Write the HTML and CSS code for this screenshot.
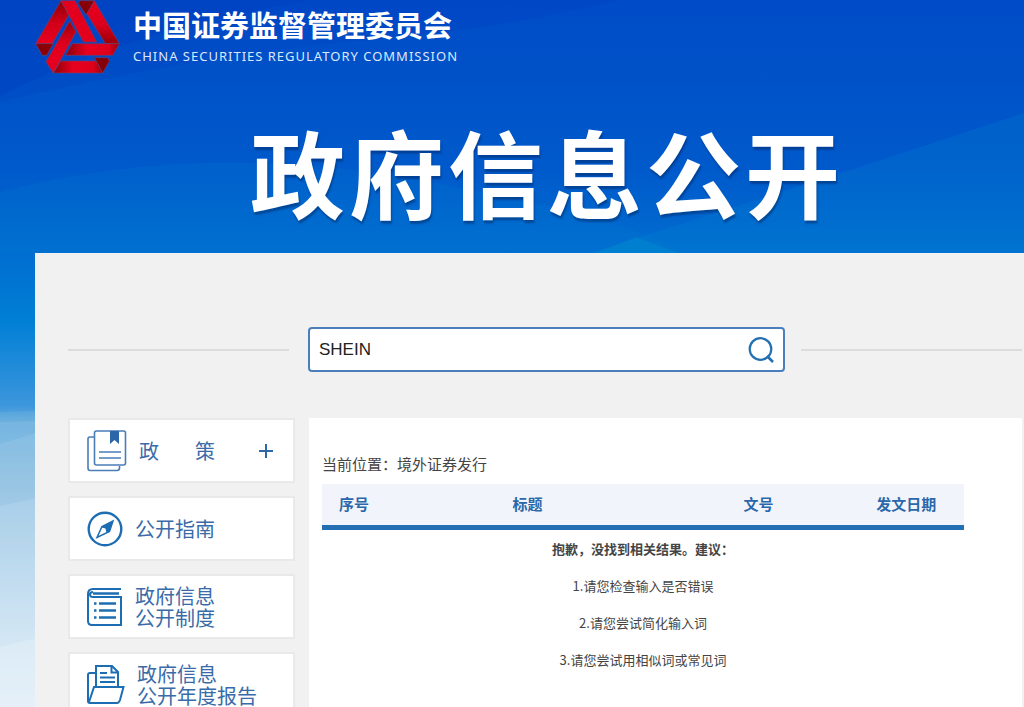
FILE: index.html
```html
<!DOCTYPE html>
<html lang="zh-CN">
<head>
<meta charset="utf-8">
<meta name="viewport" content="width=device-width, initial-scale=1">
<title>政府信息公开</title>
<link rel="stylesheet" href="styles.css">
</head>
<body>
<div class="page">
  <svg class="backdrop" viewBox="0 0 1024 707" preserveAspectRatio="none" aria-hidden="true">
    <path d="M0 0H310Q130 30 0 96Z" fill="#0038bd" opacity=".25"/>
    <path d="M0 102Q200 55 350 42T620 0H0Z" fill="#0038bd" opacity=".15"/>
    <path d="M0 192Q200 140 420 180T680 253H0Z" fill="#0080d0" opacity=".18"/>
    <path d="M1024 113L850 170L590 253H1024Z" fill="#0088d0" opacity=".22"/>
    <path d="M595 253L636 237L678 253Z" fill="#00a0d0" opacity=".25"/>
    <path d="M0 412L36 411V707H0Z" fill="#8fd0e4" opacity=".15"/>
    <path d="M0 422L36 421V707H0Z" fill="#c0dcf0" opacity=".15"/>
    <path d="M0 444L36 433V707H0Z" fill="#fff" opacity=".08"/>
    <path d="M0 506L36 498V707H0Z" fill="#fff" opacity=".12"/>
    <path d="M0 647L36 638V707H0Z" fill="#fff" opacity=".2"/>
  </svg>

  <header class="masthead">
    <svg class="logo" viewBox="105 0 255 220" aria-hidden="true">
      <defs>
        <linearGradient id="down" x1="0" y1="0" x2="0" y2="1"><stop offset="0" stop-color="#8c0008"/><stop offset=".5" stop-color="#d00018"/><stop offset="1" stop-color="#e8001f"/></linearGradient>
        <linearGradient id="up" x1="0" y1="0" x2="0" y2="1"><stop offset="0" stop-color="#e8001f"/><stop offset=".55" stop-color="#dc001c"/><stop offset="1" stop-color="#980008"/></linearGradient>
        <linearGradient id="arm" x1="0" y1="0" x2="0" y2="1"><stop offset="0" stop-color="#9c000b"/><stop offset=".45" stop-color="#e0001d"/><stop offset="1" stop-color="#e8001f"/></linearGradient>
        <linearGradient id="side" x1="0" y1="0" x2="1" y2="0"><stop offset="0" stop-color="#8c0008"/><stop offset=".4" stop-color="#e8001f"/><stop offset=".8" stop-color="#df001c"/><stop offset="1" stop-color="#9a0009"/></linearGradient>
      </defs>
      <g stroke="#744069" stroke-width="2">
        <path d="M183 1L207 43L156 130H107Z" fill="url(#down)"/>
        <path d="M183 1H225L290 125H250Z" fill="#e3001e"/>
        <path d="M283 1L358 130H316L260 39Z" fill="url(#up)"/>
        <path d="M239 1H283L258 44L235 9Z" fill="#870007"/>
        <path d="M107 130H160L140 165H127Z" fill="#890007"/>
        <path d="M216 130H358L338 165H197Z" fill="url(#side)"/>
        <path d="M182 182H289L308 218H160Z" fill="url(#side)"/>
        <path d="M283 172H324L328 183L308 218Z" fill="#850007"/>
        <path d="M209 62L228 95L160 218L138 184Z" fill="url(#arm)"/>
      </g>
    </svg>
    <div class="org">
      <div class="org-name">中国证券监督管理委员会</div>
      <div class="org-en">CHINA SECURITIES REGULATORY COMMISSION</div>
    </div>
  </header>

  <h1 class="title">政府信息公开</h1>

  <main class="panel">
    <form class="search-row">
      <span class="rule"></span>
      <div class="search">
        <input class="search-input" type="text" value="SHEIN" aria-label="搜索">
        <button class="search-button" type="button" aria-label="搜索">
          <svg viewBox="0 0 26 26" fill="none" stroke="#2470b3" stroke-width="2.2"><circle cx="12.500" cy="12" r="10.8"/><path d="M19 19l6 6" stroke-width="2.6"/></svg>
        </button>
      </div>
      <span class="rule"></span>
    </form>

    <div class="columns">
      <nav class="sidebar">
        <a class="card" href="#">
          <svg class="icon icon-wide" viewBox="0 0 40 42" fill="none" stroke="#4a7db8" stroke-width="1.6"><path d="M7 7H3Q1 7 1 9V38Q1 40.500 3 40.500H30Q32.500 40.500 32.500 38V36"/><rect x="7.500" y="1" width="31" height="34" rx="2"/><path d="M12 22H34M12 28H34"/><path d="M23 1H32V14L27.500 10L23 14Z" fill="#2b66a9" stroke="none"/></svg>
          <span class="label spread"><span>政</span><span>策</span></span>
          <svg class="plus" viewBox="0 0 16 16" stroke="#2d67a8" stroke-width="2"><path d="M8 1V15M1 8H15"/></svg>
        </a>
        <a class="card" href="#">
          <svg class="icon" viewBox="0 0 36 36" fill="none" stroke="#1c6db2"><circle cx="18" cy="18" r="16.300" stroke-width="2.400"/><path d="M26 10L22.500 20.500L10 26.500L15 15.500Z" stroke-width="1.500"/><path d="M26 10L22.500 20.500L19.500 22L18.500 17.500L14.500 16.500L15 15.500Z" fill="#1c6db2" stroke="none"/></svg>
          <span class="label">公开指南</span>
        </a>
        <a class="card" href="#">
          <svg class="icon" viewBox="0 0 36 38" fill="none" stroke="#1c6db2" stroke-width="2"><path d="M34 1H6Q1 1 1 6V33Q1 37 5 37H34V9H6Q3 9 3 6.500T6 4"/><path d="M6 5.500H32" stroke-width="2.500"/><path d="M12 15.500H29M12 22.500H29M12 29.500H29" stroke-width="2.400"/><path d="M7 15.500H9.500M7 22.500H9.500M7 29.500H9.500" stroke-width="2.400"/></svg>
          <span class="label">政府信息<br>公开制度</span>
        </a>
        <a class="card" href="#">
          <svg class="icon icon-folder" viewBox="0 0 38 40" fill="none" stroke="#1c6db2" stroke-width="2"><path d="M9 8H3Q1 8 1 10V36Q1 38 3 38H30Q32 38 33 35L36.500 22H7L2 37"/><path d="M9 22V1H25L31 7V22"/><path d="M24.500 1V7.500H31"/><path d="M13 8H20M13 12.500H28M13 17H28"/></svg>
          <span class="label">政府信息<br>公开年度报告</span>
        </a>
      </nav>

      <section class="content">
        <p class="crumb">当前位置：境外证券发行</p>
        <table class="results">
          <colgroup><col class="c-no"><col class="c-title"><col class="c-doc"><col class="c-date"></colgroup>
          <thead><tr><th>序号</th><th>标题</th><th>文号</th><th>发文日期</th></tr></thead>
          <tbody><tr><td colspan="4">
            <p class="tip strong">抱歉，没找到相关结果。建议：</p>
            <p class="tip">1.请您检查输入是否错误</p>
            <p class="tip">2.请您尝试简化输入词</p>
            <p class="tip">3.请您尝试用相似词或常见词</p>
          </td></tr></tbody>
        </table>
      </section>
    </div>
  </main>
</div>
</body>
</html>
```

FILE: styles.css
```css
* { box-sizing: border-box; }

body {
  margin: 0;
  font-family: "Noto Sans CJK SC", sans-serif;
  color: #444;
}

p, h1 { margin: 0; }

.page {
  position: relative;
  display: flex;
  flex-direction: column;
  height: 100vh;
  overflow: hidden;
  background: linear-gradient(#004bc8 0, #0052c8 80px, #005acb 170px, #006dd0 250px, #007fd5 320px, #3c96dc 405px, #62a9dc 420px, #8abbe0 490px, #b8d5ee 580px, #d2e4f4 630px, #ecf1fb 707px);
}

.backdrop {
  position: absolute;
  inset: 0;
  width: 100%;
  height: 100%;
}

.masthead {
  position: relative;
  display: flex;
  gap: 13px;
  padding-left: 35px;
}

.logo { width: 85px; height: 74px; }

.org { padding-top: 7px; color: #fff; }

.org-name {
  font-size: 29px;
  font-weight: 700;
  line-height: 34px;
}

.org-en {
  padding-top: 6px;
  font: 13px/18px "Noto Sans", sans-serif;
  letter-spacing: 1px;
  color: #dce8fa;
}

.title {
  position: relative;
  padding: 40px 0 26px 70px;
  font-size: 95px;
  font-weight: 700;
  line-height: 113px;
  letter-spacing: 4px;
  text-align: center;
  color: #fff;
  text-shadow: 1px 3px 2px rgba(0, 40, 100, .5);
}

.panel {
  position: relative;
  flex: 1 0 auto;
  margin-left: 35px;
  padding: 74px 2px 0 33px;
  background: #f1f1f1;
}

.search-row {
  display: flex;
  align-items: center;
  gap: 16px;
}

.rule { flex: 1; height: 2px; background: #dcdcdc; }
.rule:first-child { margin-right: 3px; }

.search {
  display: flex;
  align-items: center;
  width: 50%;
  height: 45px;
  padding: 0 9px;
  border: 2px solid #4a7fbc;
  border-radius: 4px;
  background: #fff;
}

.search-input {
  flex: 1;
  min-width: 0;
  padding: 0;
  border: 0;
  outline: 0;
  background: none;
  font: 17px "Liberation Sans", Arial, sans-serif;
  color: #222;
}

.search-button {
  width: 26px;
  height: 26px;
  padding: 0;
  border: 0;
  background: none;
}

.search-button svg { display: block; }

.columns {
  display: flex;
  align-items: stretch;
  gap: 14px;
  padding-top: 46px;
}

.sidebar {
  display: flex;
  flex-direction: column;
  flex: 0 0 227px;
  gap: 13px;
}

.card {
  display: flex;
  align-items: center;
  gap: 12px;
  min-height: 65px;
  padding: 1px 19px 0 17px;
  border: 2px solid #e9e9e9;
  background: #fff;
  color: #3a6ba8;
  text-decoration: none;
}

.icon { flex: none; width: 36px; height: 38px; }
.icon-wide { width: 40px; height: 42px; }
.icon-folder { width: 38px; height: 40px; }

.label { font-size: 20px; line-height: 22px; white-space: nowrap; }
.spread { display: flex; gap: 36px; }
.plus { width: 16px; height: 16px; margin-left: auto; }

.content {
  flex: 1;
  padding: 35px 58px 0 13px;
  background: #fff;
}

.crumb { font-size: 15px; line-height: 22px; }

.results {
  width: 100%;
  margin-top: 9px;
  border-collapse: collapse;
  table-layout: fixed;
}

.results th {
  height: 43px;
  padding: 0;
  border-bottom: 5px solid #246eb4;
  background: #f1f5fb;
  font-size: 15px;
  line-height: 22px;
  color: #2b67aa;
}

.results td { padding: 0; text-align: center; }

.c-no { width: 10%; }
.c-title { width: 44%; }
.c-doc { width: 28%; }
.c-date { width: 18%; }

.tip { font-size: 13px; line-height: 37px; }
.strong { font-weight: 700; }
```
